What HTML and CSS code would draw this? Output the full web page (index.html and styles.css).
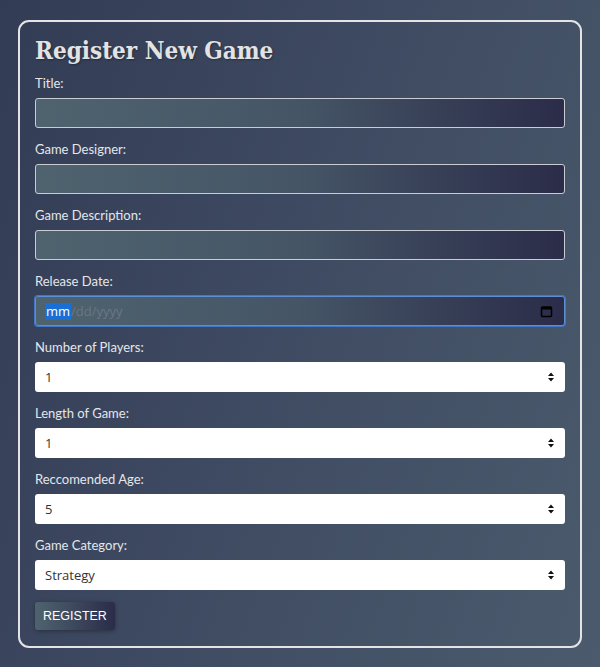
FILE: index.html
```html
<!DOCTYPE html>
<html lang="en">
<head>
<meta charset="utf-8">
<title>Register New Game</title>
<link rel="stylesheet" href="styles.css">
</head>
<body>
<form class="card">
  <h1 class="title">Register New Game</h1>
  <label class="label" for="t">Title:</label>
  <input class="field" id="t" type="text">
  <label class="label" for="d">Game Designer:</label>
  <input class="field" id="d" type="text">
  <label class="label" for="g">Game Description:</label>
  <input class="field" id="g" type="text">
  <label class="label">Release Date:</label>
  <div class="field date">
    <span class="seg-on">mm</span><span class="seg-off">/dd/yyyy</span>
    <svg class="cal" width="13" height="13" viewBox="0 0 13 13"><rect x="1.5" y="2" width="10" height="9.5" rx="1" fill="none" stroke="#000" stroke-width="1.5"/><rect x="1.5" y="2" width="10" height="2.5" fill="#000"/></svg>
  </div>
  <label class="label" for="p">Number of Players:</label>
  <select class="select" id="p"><option>1</option></select>
  <label class="label" for="l">Length of Game:</label>
  <select class="select" id="l"><option>1</option></select>
  <label class="label" for="a">Reccomended Age:</label>
  <select class="select" id="a"><option>5</option></select>
  <label class="label" for="c">Game Category:</label>
  <select class="select" id="c"><option>Strategy</option></select>
  <div class="actions"><button class="btn" type="button">REGISTER</button></div>
</form>
</body>
</html>
```
FILE: styles.css
```css
html, body { height: 100%; }
body {
  margin: 0;
  padding: 20px 18px;
  box-sizing: border-box;
  background: linear-gradient(110deg, #323c55 0%, #3e4a61 45%, #4b5b6d 100%);
  font-family: "Lato", "Open Sans", sans-serif;
}
.card {
  box-sizing: border-box;
  width: 564px;
  height: 628px;
  border: 2px solid #e4e4e4;
  border-radius: 11px;
  padding: 15px 15px 15px;
  display: flex;
  flex-direction: column;
}
.title {
  margin: 0 0 9px;
  font-family: "DejaVu Serif Condensed", "DejaVu Serif", serif;
  font-stretch: condensed;
  font-weight: bold;
  font-size: 24px;
  line-height: 28px;
  color: #e3e3e3;
  text-shadow: 1px 1px 2px rgba(0,0,0,0.35);
}
.label {
  display: block;
  font-size: 13px;
  line-height: 18px;
  color: #e4e6ea;
  margin-bottom: 6px;
}
.field {
  box-sizing: border-box;
  height: 30px;
  width: 100%;
  margin: 0 0 12px;
  border: 1px solid #c9ccd2;
  border-radius: 3px;
  background: linear-gradient(to right, #4f636f 0%, #455566 50%, #2b2c49 100%);
  color: #ddd;
  font-family: "Open Sans", sans-serif;
  font-size: 13px;
  padding: 0 9px;
}
.date {
  display: flex;
  align-items: center;
  border: 1px solid #5a8fd6;
  box-shadow: 0 0 0 1px #3f78c8;
  color: #5d6b7a;
}
.seg-on {
  background: #1a6fd6;
  color: #fff;
  padding: 0 1px;
  line-height: 17px;
}
.seg-off { color: #6a7785; }
.cal { margin-left: auto; margin-right: 2px; }
.select {
  box-sizing: border-box;
  height: 30px;
  width: 100%;
  margin: 0 0 12px;
  border: 0;
  border-radius: 3px;
  background: #fff url("data:image/svg+xml,%3Csvg xmlns='http://www.w3.org/2000/svg' width='8' height='10' viewBox='0 0 8 10'%3E%3Cpath d='M4 0.5L7 4H1z M4 9.5L7 6H1z' fill='%23111'/%3E%3C/svg%3E") no-repeat right 10px center;
  -webkit-appearance: none;
  appearance: none;
  font-family: "Open Sans", sans-serif;
  font-size: 13px;
  color: #333;
  padding: 0 9px 0 10px;
}
.actions { display: flex; }
.btn {
  height: 28px;
  padding: 0 8px;
  border: 0;
  border-radius: 3px;
  background: linear-gradient(to right, #4f636f, #2b2c49);
  box-shadow: 0 1px 4px rgba(0,0,0,0.35);
  color: #fff;
  font-family: "Liberation Sans", Arial, sans-serif;
  font-size: 12.5px;
}
```
